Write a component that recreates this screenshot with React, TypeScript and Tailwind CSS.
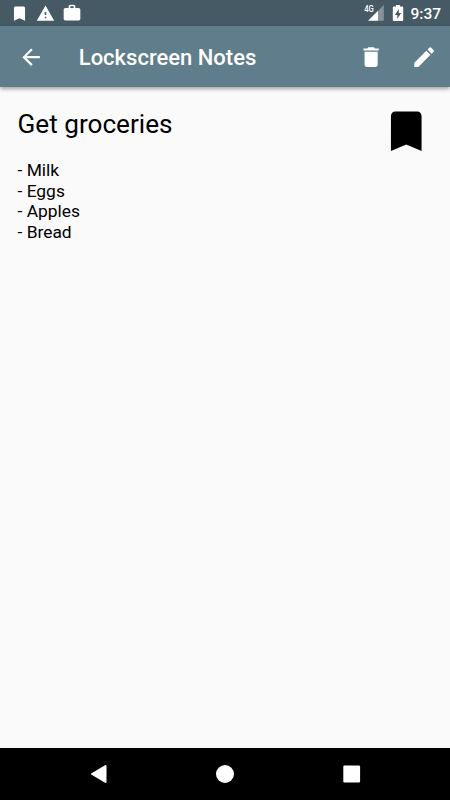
import type { ReactNode } from "react";
import { MdArrowBack, MdBookmark, MdDelete, MdEdit } from "react-icons/md";

const note = {
  title: "Get groceries",
  items: ["Milk", "Eggs", "Apples", "Bread"],
};

export default function App() {
  return (
    <div className="flex h-screen w-full flex-col overflow-hidden bg-[#fafafa] font-['Roboto',sans-serif] text-black">
      <StatusBar />
      <Toolbar />

      <main className="flex flex-1 items-start justify-between px-[17.5px] pt-[17.5px]">
        <div>
          <h1 className="mt-[4px] text-[26.15px] leading-[31px]">{note.title}</h1>
          <ul className="mt-[20.4px] text-[17.4px] leading-[20.7px]">
            {note.items.map((item) => (
              <li key={item}>- {item}</li>
            ))}
          </ul>
        </div>
        <MdBookmark className="size-[52.5px]" />
      </main>

      <NavBar />
    </div>
  );
}

function StatusBar() {
  return (
    <div className="flex h-[26px] shrink-0 items-center justify-between bg-[#455a64] pl-[10px] pr-[9px] text-white">
      <div className="flex items-center gap-[7px]">
        <MdBookmark className="size-[19px]" />
        <WarningIcon />
        <BriefcaseIcon />
      </div>
      <div className="flex items-center">
        <SignalIcon />
        <BatteryIcon />
        <span className="ml-[6px] pt-[3px] text-[15.5px] font-medium leading-none">9:37</span>
      </div>
    </div>
  );
}

function Toolbar() {
  return (
    <header className="z-10 flex h-[61px] shrink-0 items-center bg-[#607d8b] pl-[17.5px] pr-[13px] text-white shadow-[0_2px_4px_rgba(0,0,0,0.35)]">
      <IconButton label="Back">
        <MdArrowBack className="size-[26.25px]" />
      </IconButton>
      <span className="ml-[35px] flex-1 pt-px text-[22px] font-medium">Lockscreen Notes</span>
      <div className="flex gap-[26.5px]">
        <IconButton label="Delete">
          <MdDelete className="size-[26.25px]" />
        </IconButton>
        <IconButton label="Edit">
          <MdEdit className="size-[26.25px]" />
        </IconButton>
      </div>
    </header>
  );
}

function IconButton({ label, children }: { label: string; children: ReactNode }) {
  return (
    <button type="button" aria-label={label} className="pt-px">
      {children}
    </button>
  );
}

function NavBar() {
  return (
    <nav className="flex h-[52px] shrink-0 items-center justify-between bg-black px-[88px] text-white">
      <svg viewBox="0 0 20 20" className="size-5" fill="currentColor">
        <path d="M3.2 9.4 17 1.2Q18.5.6 18.5 2v16q0 1.4-1.5.8L3.2 10.6q-.9-.6 0-1.2z" />
      </svg>
      <svg viewBox="0 0 20 20" className="size-5" fill="currentColor">
        <circle cx="10" cy="10" r="9" />
      </svg>
      <svg viewBox="0 0 20 20" className="size-5" fill="currentColor">
        <rect x="1.3" y="1.6" width="16.8" height="16.8" rx="1.2" />
      </svg>
    </nav>
  );
}

function WarningIcon() {
  return (
    <svg viewBox="0 0 24 24" className="size-[19px]" fill="currentColor">
      <path d="M1 21h22L12 2 1 21zm12-3h-2v-2h2v2zm0-4h-2v-4h2v4z" />
    </svg>
  );
}

function BriefcaseIcon() {
  return (
    <svg viewBox="0 0 24 24" className="size-5" fill="currentColor">
      <path d="M20 6h-4V4c0-1.11-.89-2-2-2h-4c-1.11 0-2 .89-2 2v2H4c-1.11 0-1.99.89-1.99 2L2 19c0 1.11.89 2 2 2h16c1.11 0 2-.89 2-2V8c0-1.11-.89-2-2-2zm-6 0h-4V4h4v2z" />
    </svg>
  );
}

// Mobile signal with the network type in the corner
function SignalIcon() {
  return (
    <svg viewBox="0 0 21 18" className="h-[18px] w-[21px]" fill="currentColor">
      <path d="M14 7 19.8 1v15.8H14z" opacity="0.35" />
      <path d="M14 6.8v10H4z" />
      <text x="0.2" y="8.2" fontSize="9" fontWeight="500" textLength="9.6" lengthAdjust="spacingAndGlyphs">
        4G
      </text>
    </svg>
  );
}

function BatteryIcon() {
  return (
    <svg viewBox="0 0 12 18" className="ml-[7px] h-[18px] w-[12px]" fill="currentColor">
      <path d="M4 1h4v1.6h2.2q1 0 1 1V16q0 1-1 1H1.800q-1 0-1-1V3.600q0-1 1-1H4z" />
      <path d="M6.8 4.900v4h2.300L5.300 15v-4.100H2.900z" fill="#455a64" />
    </svg>
  );
}
